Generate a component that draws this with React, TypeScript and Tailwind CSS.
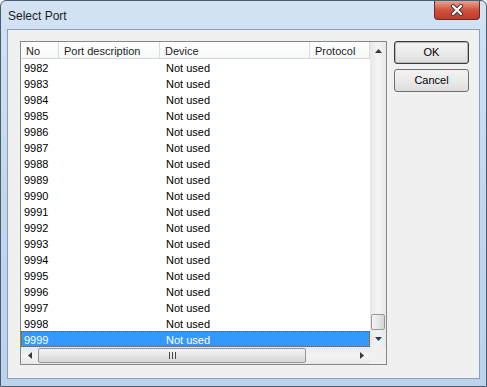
import React from 'react';

const ROWS = Array.from({ length: 18 }, (_, i) => 9982 + i);

const COLS = [
  { label: 'No', w: 'w-[38px]' },
  { label: 'Port description', w: 'w-[101px]' },
  { label: 'Device', w: 'w-[150px]' },
  { label: 'Protocol', w: 'flex-1' },
];

function Arrow({ dir }: { dir: 'up' | 'down' | 'left' | 'right' }) {
  const pts = {
    up: '0,4 3.5,0 7,4',
    down: '0,0 3.5,4 7,0',
    left: '4,0 0,3.5 4,7',
    right: '0,0 4,3.5 0,7',
  }[dir];
  const vert = dir === 'up' || dir === 'down';
  return (
    <svg width={vert ? 7 : 4} height={vert ? 4 : 7} viewBox={vert ? '0 0 7 4' : '0 0 4 7'}>
      <polygon points={pts} fill="#3a3a3a" />
    </svg>
  );
}

export default function App() {
  const font = { fontFamily: '"Liberation Sans", Arial, sans-serif' };

  return (
    <div className="w-[487px] h-[387px] bg-white" style={font}>
      {/* Window frame */}
      <div className="w-[487px] h-[387px] flex flex-col rounded-t-[6px] border border-[#4a5c72] bg-gradient-to-b from-[#d3e3f4] via-[#c2d7ee] to-[#bcd3eb] overflow-hidden">
        {/* Title bar */}
        <div className="h-[28px] flex items-start justify-between shrink-0">
          <span className="text-[12px] text-[#1e1e1e] pl-[7px] pt-[6px]">Select Port</span>
          <button className="mr-[6px] w-[46px] h-[19px] rounded-b-[4px] border border-t-0 border-[#6b2a22] bg-gradient-to-b from-[#e8a193] via-[#d0513c] to-[#c23c28] flex items-center justify-center">
            <svg width="14" height="12" viewBox="0 0 14 12">
              <path d="M3 2 L11 10 M11 2 L3 10" stroke="#3b3b3b" strokeWidth="4" strokeLinecap="round" />
              <path d="M3 2 L11 10 M11 2 L3 10" stroke="#ffffff" strokeWidth="2.2" strokeLinecap="round" />
            </svg>
          </button>
        </div>

        {/* Client area */}
        <div className="flex-1 mx-[6px] mb-[7px] border border-[#8a9fb8] bg-[#f0f0f0] flex gap-[7px] pl-[12px] pt-[11px]">
          {/* List view */}
          <div className="w-[367px] h-[324px] border border-[#828790] bg-white flex flex-col">
            <div className="flex h-[305px]">
              <div className="w-[349px] flex flex-col overflow-hidden">
                {/* Header */}
                <div className="h-[17px] flex border-b border-[#d5d5d5] bg-gradient-to-b from-white to-[#f7f8f9] shrink-0">
                  {COLS.map((c) => (
                    <div
                      key={c.label}
                      className={`${c.w} shrink-0 border-r border-[#dcdcdc] pl-[5px] text-[11px] leading-[18px] text-[#1e1e1e] whitespace-nowrap`}
                    >
                      {c.label}
                    </div>
                  ))}
                </div>
                {/* Rows */}
                {ROWS.map((n) => {
                  const sel = n === 9999;
                  return (
                    <div
                      key={n}
                      className={`h-[16px] flex text-[11px] leading-[16px] shrink-0 border ${
                        sel ? 'bg-[#3399ff] text-white border-dotted border-[#9a4d00]' : 'text-black border-transparent'
                      }`}
                    >
                      <div className="w-[38px] shrink-0 pl-[2px] h-[14px]">{n}</div>
                      <div className="w-[101px] shrink-0" />
                      <div className="w-[150px] shrink-0 pl-[5px] h-[14px]">Not used</div>
                      <div className="flex-1" />
                    </div>
                  );
                })}
              </div>
              {/* Vertical scrollbar */}
              <div className="w-[16px] flex flex-col bg-gradient-to-r from-[#e8e8e8] via-[#f4f4f4] to-[#e8e8e8]">
                <div className="h-[17px] flex items-center justify-center">
                  <Arrow dir="up" />
                </div>
                <div className="flex-1 flex flex-col justify-end">
                  <div className="h-[16px] mx-[1px] rounded-[2px] border border-[#979797] bg-gradient-to-r from-[#f3f3f3] via-[#e6e6e6] to-[#d6d6d6]" />
                </div>
                <div className="h-[17px] flex items-center justify-center">
                  <Arrow dir="down" />
                </div>
              </div>
            </div>
            {/* Horizontal scrollbar */}
            <div className="h-[17px] flex">
              <div className="w-[349px] flex bg-gradient-to-b from-[#e8e8e8] via-[#f4f4f4] to-[#e8e8e8]">
                <div className="w-[17px] flex items-center justify-center">
                  <Arrow dir="left" />
                </div>
                <div className="flex-1 flex">
                  <div className="w-[268px] my-[1px] rounded-[2px] border border-[#979797] bg-gradient-to-b from-[#f3f3f3] via-[#e6e6e6] to-[#d4d4d4] flex items-center justify-center">
                    <svg width="7" height="7" viewBox="0 0 7 7">
                      <path d="M0.5 0 V7 M3.5 0 V7 M6.5 0 V7" stroke="#4a4a4a" strokeWidth="1" />
                    </svg>
                  </div>
                </div>
                <div className="w-[17px] flex items-center justify-center">
                  <Arrow dir="right" />
                </div>
              </div>
              <div className="flex-1 bg-[#f0f0f0]" />
            </div>
          </div>

          {/* Buttons */}
          <div className="flex flex-col gap-[5px]">
            <button className="w-[75px] h-[23px] rounded-[3px] border border-[#3c3c3c] bg-gradient-to-b from-[#f2f2f2] via-[#ebebeb] to-[#dcdcdc] text-[11px] text-black shadow-[inset_0_0_0_1px_#b6b6b6]">
              OK
            </button>
            <button className="w-[75px] h-[23px] rounded-[3px] border border-[#707070] bg-gradient-to-b from-[#f2f2f2] via-[#ebebeb] to-[#dcdcdc] text-[11px] text-black">
              Cancel
            </button>
          </div>
        </div>
      </div>
    </div>
  );
}
